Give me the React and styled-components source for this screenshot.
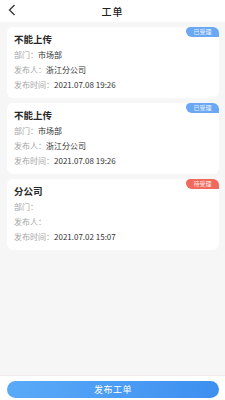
import React from 'react';
import styled, { createGlobalStyle } from 'styled-components';

const GlobalStyle = createGlobalStyle`
  html, body {
    margin: 0;
    padding: 0;
    background: #f6f6f6;
    font-family: "Noto Sans CJK SC", "Noto Sans", sans-serif;
  }
`;

const Page = styled.div`
  width: 225px;
  height: 400px;
  display: flex;
  flex-direction: column;
  background: #f6f6f6;
  overflow: hidden;
`;

const Header = styled.div`
  height: 22px;
  background: #fff;
  display: flex;
  align-items: center;
  justify-content: center;
  position: relative;
  flex-shrink: 0;
`;

const BackButton = styled.div`
  position: absolute;
  left: 8px;
  top: 3px;
  width: 12px;
  height: 14px;
  display: flex;
  align-items: center;
`;

const HeaderTitle = styled.div`
  font-size: 10px;
  color: #222;
  font-weight: 500;
  letter-spacing: 1px;
`;

const List = styled.div`
  flex: 1;
  display: flex;
  flex-direction: column;
  gap: 5px;
  padding: 5px 6px 0 7px;
`;

const Card = styled.div`
  position: relative;
  height: 71px;
  background: #fff;
  border-radius: 6px;
  padding: 6px 9px 0 7px;
  box-sizing: border-box;
  overflow: hidden;
`;

const Badge = styled.div`
  position: absolute;
  top: 0;
  right: 0;
  width: 33px;
  height: 10px;
  border-radius: 5px 0 0 7px;
  background: ${p => (p.$pending ? '#f1695b' : '#6aa8f4')};
  color: rgba(255, 255, 255, 0.9);
  font-size: 6px;
  line-height: 10px;
  text-align: center;
`;

const CardTitle = styled.div`
  font-size: 9.5px;
  font-weight: 700;
  color: #262626;
  line-height: 12px;
  margin-bottom: 2px;
`;

const Row = styled.div`
  font-size: 8px;
  line-height: 15px;
  height: 15px;
  color: #a5a5a5;
`;

const Value = styled.span`
  color: #333;
`;

const Footer = styled.div`
  height: 25px;
  box-sizing: border-box;
  background: #fff;
  border-top: 1px solid #f0eaea;
  display: flex;
  align-items: flex-start;
  padding: 5px 6px 0 7px;
  flex-shrink: 0;
`;

const SubmitButton = styled.div`
  flex: 1;
  height: 17px;
  border-radius: 9px;
  background: linear-gradient(90deg, #5aaaf8, #3d8ff0);
  color: #fff;
  font-size: 9px;
  line-height: 17px;
  text-align: center;
  letter-spacing: 0.5px;
`;

const orders = [
  { title: '不能上传', dept: '市场部', publisher: '浙江分公司', time: '2021.07.08 19:26', pending: false },
  { title: '不能上传', dept: '市场部', publisher: '浙江分公司', time: '2021.07.08 19:26', pending: false },
  { title: '分公司', dept: '', publisher: '', time: '2021.07.02 15:07', pending: true },
];

export default function App() {
  return (
    <Page>
      <GlobalStyle />
      <Header>
        <BackButton>
          <svg width="8" height="12" viewBox="0 0 8 12">
            <path d="M6.5 1 L1.5 6 L6.5 11" fill="none" stroke="#333" strokeWidth="1.3" />
          </svg>
        </BackButton>
        <HeaderTitle>工单</HeaderTitle>
      </Header>
      <List>
        {orders.map((o, i) => (
          <Card key={i}>
            <Badge $pending={o.pending}>{o.pending ? '待受理' : '已受理'}</Badge>
            <CardTitle>{o.title}</CardTitle>
            <Row>部门：<Value>{o.dept}</Value></Row>
            <Row>发布人：<Value>{o.publisher}</Value></Row>
            <Row>发布时间：<Value>{o.time}</Value></Row>
          </Card>
        ))}
      </List>
      <Footer>
        <SubmitButton>发布工单</SubmitButton>
      </Footer>
    </Page>
  );
}
